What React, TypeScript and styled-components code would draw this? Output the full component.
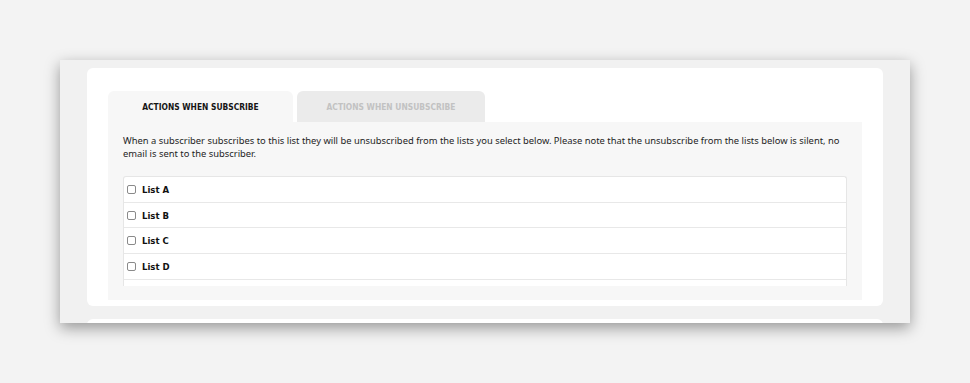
import React, { useState } from "react";
import styled, { createGlobalStyle } from "styled-components";

const GlobalStyle = createGlobalStyle`
  html, body {
    margin: 0;
    padding: 0;
    background: #f3f3f3;
  }
  * {
    box-sizing: border-box;
  }
`;

const LISTS = ["List A", "List B", "List C", "List D"];

const Page = styled.div`
  width: 970px;
  height: 383px;
  padding: 60px 0 0 60px;
  overflow: hidden;
`;

const Frame = styled.div`
  width: 850px;
  height: 263px;
  background: #f1f1f1;
  box-shadow: 0 5px 14px rgba(0, 0, 0, 0.38);
  padding: 8px 27px 0 27px;
  overflow: hidden;
  display: flex;
  flex-direction: column;
  gap: 13px;
`;

const Card = styled.div`
  background: #ffffff;
  border-radius: 6px;
  padding: 23px 21px 6px 21px;
  flex-shrink: 0;
`;

const NextCard = styled.div`
  background: #ffffff;
  border-radius: 6px 6px 0 0;
  height: 20px;
  flex-shrink: 0;
`;

const TabBar = styled.div`
  display: flex;
  gap: 4px;
`;

const Tab = styled.button<{ $active: boolean; $width: number }>`
  width: ${(p) => p.$width}px;
  height: 31px;
  border: none;
  border-radius: 6px 6px 0 0;
  background: ${(p) => (p.$active ? "#f7f7f7" : "#ebebeb")};
  color: ${(p) => (p.$active ? "#151515" : "#c2c2c2")};
  font-family: "DejaVu Sans Condensed", "Roboto", sans-serif;
  font-weight: 700;
  font-size: 8.4px;
  text-transform: uppercase;
  cursor: pointer;
  padding: 0;
`;

const Panel = styled.div`
  background: #f7f7f7;
  padding: 12px 15px 14px 15px;
`;

const Note = styled.p`
  margin: 0 0 16px 0;
  font-family: "Noto Sans", "Open Sans", sans-serif;
  font-size: 9.4px;
  line-height: 13px;
  color: #1e1e1e;
`;

const ListBox = styled.div`
  background: #ffffff;
  border: 1px solid #e6e6e6;
  border-bottom: none;
  border-radius: 3px 3px 0 0;
  height: 110px;
  overflow: hidden;
`;

const Row = styled.label`
  display: flex;
  align-items: center;
  gap: 6px;
  height: 25.7px;
  padding-left: 3px;
  border-bottom: 1px solid #e8e8e8;
  font-family: "DejaVu Sans Condensed", "Roboto", sans-serif;
  font-weight: 700;
  font-size: 9.5px;
  color: #111111;
  cursor: pointer;
`;

const Box = styled.input`
  appearance: none;
  width: 9px;
  height: 9px;
  margin: 0;
  border: 1px solid #8a8a8a;
  border-radius: 2px;
  background: #ffffff;

  &:checked {
    background: #3a7bd5;
    border-color: #3a7bd5;
  }
`;

export default function App() {
  const [tab, setTab] = useState(0);
  const [checked, setChecked] = useState<Record<string, boolean>>({});

  return (
    <>
      <GlobalStyle />
      <Page>
        <Frame>
          <Card>
            <TabBar>
              <Tab $active={tab === 0} $width={185} onClick={() => setTab(0)}>
                Actions when subscribe
              </Tab>
              <Tab $active={tab === 1} $width={188} onClick={() => setTab(1)}>
                Actions when unsubscribe
              </Tab>
            </TabBar>
            <Panel>
              <Note>
                When a subscriber subscribes to this list they will be unsubscribed from the lists
                you select below. Please note that the unsubscribe from the lists below is silent, no
                email is sent to the subscriber.
              </Note>
              <ListBox>
                {LISTS.map((name) => (
                  <Row key={name}>
                    <Box
                      type="checkbox"
                      checked={!!checked[name]}
                      onChange={() => setChecked({ ...checked, [name]: !checked[name] })}
                    />
                    {name}
                  </Row>
                ))}
              </ListBox>
            </Panel>
          </Card>
          <NextCard />
        </Frame>
      </Page>
    </>
  );
}
